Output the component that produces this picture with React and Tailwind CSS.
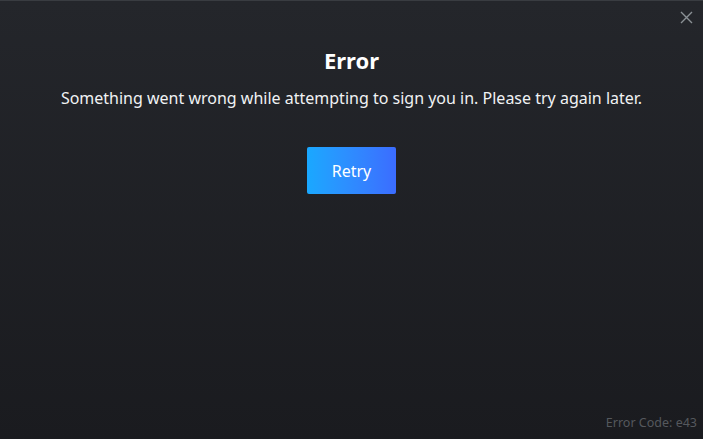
export default function App() {
  return (
    <div className="relative w-[703px] h-[439px] overflow-hidden bg-gradient-to-b from-[#24262b] to-[#1a1b1f] border-t border-[#393c41] flex flex-col items-center" style={{ fontFamily: '"Noto Sans", "Open Sans", sans-serif' }}>
      <button className="absolute top-[9px] right-[10px] w-[14px] h-[14px] flex items-center justify-center text-[#8b9196]">
        <svg width="13" height="13" viewBox="0 0 13 13" fill="none" stroke="currentColor" strokeWidth="1.4">
          <path d="M1 1L12 12M12 1L1 12" />
        </svg>
      </button>
      <h1 className="mt-[44px] text-[22px] leading-[30px] font-bold text-white">Error</h1>
      <p className="mt-[12px] text-[16px] leading-[22px] text-[#f0f2f4]">Something went wrong while attempting to sign you in. Please try again later.</p>
      <button className="mt-[38px] w-[89px] h-[47px] rounded-[2px] bg-gradient-to-r from-[#19a8ff] to-[#3b6cff] text-white text-[16px]">Retry</button>
      <div className="absolute right-[6px] bottom-[6px] text-[12.5px] text-[#55585d]">Error Code: e43</div>
    </div>
  );
}
